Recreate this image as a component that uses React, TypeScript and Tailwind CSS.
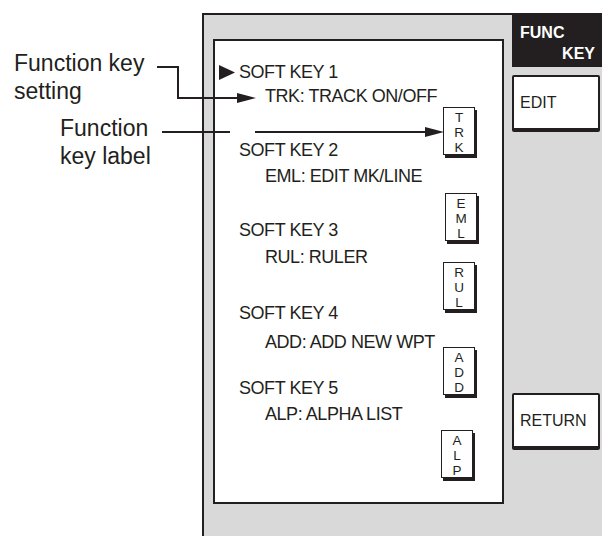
const ink = '#231f20';

type SoftKey = {
  head: string;
  sub: string;
  label: string[];
  headMt: string;
  subMt: string;
  boxMt: string;
  boxMl: string;
};

const softKeys: SoftKey[] = [
  { head: 'SOFT KEY 1', sub: 'TRK: TRACK ON/OFF', label: ['T', 'R', 'K'], headMt: 'mt-[21px]', subMt: 'mt-[4px]', boxMt: 'mt-[66px]', boxMl: 'ml-[2px]' },
  { head: 'SOFT KEY 2', sub: 'EML: EDIT MK/LINE', label: ['E', 'M', 'L'], headMt: 'mt-[34px]', subMt: 'mt-[6px]', boxMt: 'mt-[38px]', boxMl: 'ml-[4px]' },
  { head: 'SOFT KEY 3', sub: 'RUL: RULER', label: ['R', 'U', 'L'], headMt: 'mt-[34px]', subMt: 'mt-[7px]', boxMt: 'mt-[21px]', boxMl: 'ml-[2px]' },
  { head: 'SOFT KEY 4', sub: 'ADD: ADD NEW WPT', label: ['A', 'D', 'D'], headMt: 'mt-[36px]', subMt: 'mt-[9px]', boxMt: 'mt-[37px]', boxMl: 'ml-[2px]' },
  { head: 'SOFT KEY 5', sub: 'ALP: ALPHA LIST', label: ['A', 'L', 'P'], headMt: 'mt-[26px]', subMt: 'mt-[6px]', boxMt: 'mt-[35px]', boxMl: 'ml-0' },
];

// vertical label shown on the soft key itself
function KeyLabel({ letters, className }: { letters: string[]; className: string }) {
  return (
    <div
      className={`${className} w-[32px] h-[48px] pt-[2px] flex flex-col items-center bg-white border border-[#231f20] shadow-[2px_3px_0_#231f20] text-[13.5px] leading-[15px]`}
    >
      {letters.map((l, i) => (
        <span key={i}>{l}</span>
      ))}
    </div>
  );
}

function SideButton({ text, className }: { text: string; className: string }) {
  return (
    <div
      className={`${className} w-[88px] h-[57px] flex items-center pl-[6px] bg-white border-2 border-b-[4px] border-[#231f20] rounded-[2px] text-[16px]`}
    >
      {text}
    </div>
  );
}

export default function App() {
  return (
    <div
      className="relative w-[602px] h-[536px] bg-white overflow-hidden flex text-[#231f20]"
      style={{ fontFamily: '"Liberation Sans", Arial, sans-serif' }}
    >
      {/* callout labels */}
      <div className="w-[202px] shrink-0 flex flex-col text-[23px] leading-[28px]">
        <div className="mt-[49px] pl-[14px]">
          <div>Function key</div>
          <div>setting</div>
        </div>
        <div className="mt-[9px] pl-[60px]">
          <div>Function</div>
          <div>key label</div>
        </div>
      </div>

      {/* display panel */}
      <div className="mt-[13px] flex-1 flex bg-[#d9d9d9] border-l-2 border-t-2 border-[#231f20]">
        <div className="ml-[9px] mt-[24px] w-[291px] h-[465px] flex bg-white border-2 border-[#231f20]">
          <div className="w-[226px] shrink-0 flex flex-col text-[18px] leading-[20px] tracking-[-0.45px]">
            {softKeys.map((k, i) => (
              <div key={k.head} className="flex flex-col">
                <div className={`${k.headMt} flex items-center pl-[4px]`}>
                  <span className="w-[20px] shrink-0 flex">
                    {i === 0 && (
                      <svg width="16" height="15" viewBox="0 0 16 15">
                        <polygon points="0,0 16,7.5 0,15" fill={ink} />
                      </svg>
                    )}
                  </span>
                  <span>{k.head}</span>
                </div>
                <div className={`${k.subMt} pl-[50px]`}>{k.sub}</div>
              </div>
            ))}
          </div>
          <div className="flex flex-col">
            {softKeys.map((k) => (
              <KeyLabel key={k.head} letters={k.label} className={`${k.boxMt} ${k.boxMl}`} />
            ))}
          </div>
        </div>

        <div className="ml-[8px] w-[90px] flex flex-col">
          <div className="h-[52px] bg-[#231f20] text-white font-bold text-[16px] leading-[21px] pt-[7px] px-[7px] flex flex-col">
            <span className="pl-[1px]">FUNC</span>
            <span className="self-end">KEY</span>
          </div>
          <SideButton text="EDIT" className="mt-[8px]" />
          <SideButton text="RETURN" className="mt-[261px]" />
        </div>
      </div>

      {/* leader lines */}
      <svg className="absolute inset-0 pointer-events-none" width="602" height="536" viewBox="0 0 602 536">
        <path d="M157 67 H178 V98 H240" fill="none" stroke={ink} strokeWidth="2" />
        <polygon points="237,93 256,98 237,103" fill={ink} />
        <path d="M162 132 H230 M255 132 H428" fill="none" stroke={ink} strokeWidth="2" />
        <polygon points="425,127 444,132 425,137" fill={ink} />
      </svg>
    </div>
  );
}
